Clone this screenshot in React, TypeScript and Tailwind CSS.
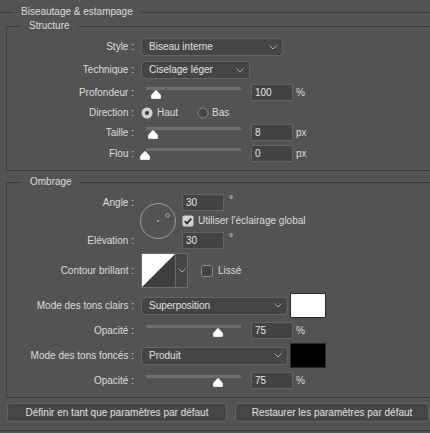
import React from 'react';

/**
 * Layer style panel: bevel & emboss settings (Photoshop, French UI).
 */

function Chevron() {
  return (
    <svg width="8" height="5" viewBox="0 0 8 5" aria-hidden="true">
      <path d="M0.5 0.5 L4 4 L7.5 0.5" fill="none" stroke="#a9a9a9" strokeWidth="1" />
    </svg>
  );
}

function Label({ children }: { children: React.ReactNode }) {
  return <div className="w-[127px] shrink-0 text-right whitespace-nowrap">{children}</div>;
}

function Row({ label, className, children }: { label: string; className: string; children: React.ReactNode }) {
  return (
    <div className={`flex items-center ${className}`}>
      <Label>{label}</Label>
      <div className="ml-[7px] flex items-center">{children}</div>
    </div>
  );
}

function Select({ value, width }: { value: string; width: string }) {
  return (
    <div
      className={`${width} h-[18px] flex items-center justify-between rounded-[3px] border border-[#636363] bg-[#454545] pl-[7px] pr-[5px] text-[#e2e2e2]`}
    >
      <span>{value}</span>
      <Chevron />
    </div>
  );
}

function NumberInput({ value }: { value: string }) {
  return (
    <div className="w-[42px] h-[17px] border border-[#626262] bg-[#434343] pl-[3px] leading-[15px] text-[#e4e4e4]">
      {value}
    </div>
  );
}

function Slider({ pos }: { pos: number }) {
  // pos = thumb centre in px from the start of the track
  return (
    <div className="relative w-[110px] h-[17px] shrink-0">
      <div className="absolute left-[5px] top-[3px] w-[95px] h-[3px] bg-[#6d6d6d]" />
      <svg
        className="absolute top-[5px]"
        style={{ left: 5 + pos - 6 }}
        width="12"
        height="11"
        viewBox="0 0 12 11"
        aria-hidden="true"
      >
        <path
          d="M6 0.8 Q6.6 0.8 7.2 1.5 L10.8 5.6 Q11.3 6.2 11.3 7 L11.3 9 Q11.3 10.3 10 10.3 L2 10.3 Q0.7 10.3 0.7 9 L0.7 7 Q0.7 6.2 1.2 5.6 L4.8 1.5 Q5.4 0.8 6 0.8 Z"
          fill="#ffffff"
          stroke="#2f2f2f"
          strokeWidth="0.6"
        />
      </svg>
    </div>
  );
}

function SliderRow({ label, pos, value, unit, className }: { label: string; pos: number; value: string; unit: string; className: string }) {
  return (
    <Row label={label} className={`h-[17px] ${className}`}>
      <Slider pos={pos} />
      <NumberInput value={value} />
      <span className="ml-[3px]">{unit}</span>
    </Row>
  );
}

function Checkbox({ checked }: { checked: boolean }) {
  return checked ? (
    <svg width="12" height="12" viewBox="0 0 12 12" aria-hidden="true">
      <rect x="0.5" y="0.5" width="11" height="11" rx="2" fill="#d4d4d4" />
      <path d="M2.8 6.2 L5 8.4 L9.3 3.6" fill="none" stroke="#2c2c2c" strokeWidth="1.8" />
    </svg>
  ) : (
    <svg width="12" height="12" viewBox="0 0 12 12" aria-hidden="true">
      <rect x="0.5" y="0.5" width="11" height="11" rx="2" fill="#454545" stroke="#8a8a8a" />
    </svg>
  );
}

function Radio({ checked }: { checked: boolean }) {
  return checked ? (
    <svg width="12" height="12" viewBox="0 0 12 12" aria-hidden="true">
      <circle cx="6" cy="6" r="5.5" fill="#cfcfcf" />
      <circle cx="6" cy="6" r="2" fill="#3a3a3a" />
    </svg>
  ) : (
    <svg width="12" height="12" viewBox="0 0 12 12" aria-hidden="true">
      <circle cx="6" cy="6" r="5" fill="#464646" stroke="#858585" />
    </svg>
  );
}

function Button({ children, width }: { children: React.ReactNode; width: string }) {
  return (
    <button
      className={`${width} h-[19px] shrink-0 rounded-[3px] border border-[#626262] bg-[#464646] text-center leading-[17px] text-[#e0e0e0]`}
    >
      {children}
    </button>
  );
}

export default function App() {
  return (
    <div className="w-[430px] h-[433px] overflow-hidden bg-[#535353] text-[10px] leading-[14px] text-[#dcdcdc] font-['Liberation_Sans',Arial,sans-serif]">
      <fieldset className="mt-[5px] border-y border-[#3d3d3d] pb-[8px]">
        <legend className="ml-[13px] px-[8px]">Biseautage &amp; estampage</legend>

        {/* Structure */}
        <fieldset className="ml-[6px] w-[440px] border border-[#3d3d3d] pt-[5px] pb-[8px]">
          <legend className="ml-[14px] px-[8px]">Structure</legend>

          <Row label="Style :" className="h-[18px]">
            <Select value="Biseau interne" width="w-[142px]" />
          </Row>
          <Row label="Technique :" className="h-[18px] mt-[5px]">
            <Select value="Ciselage léger" width="w-[109px]" />
          </Row>
          <SliderRow label="Profondeur :" pos={9.5} value="100" unit="%" className="mt-[5px]" />
          <Row label="Direction :" className="h-[17px] mt-[3px]">
            <Radio checked />
            <span className="ml-[4px] w-[40px]">Haut</span>
            <Radio checked={false} />
            <span className="ml-[3px]">Bas</span>
          </Row>
          <SliderRow label="Taille :" pos={7} value="8" unit="px" className="mt-[3px]" />
          <SliderRow label="Flou :" pos={-1} value="0" unit="px" className="mt-[4px]" />
        </fieldset>

        {/* Ombrage */}
        <fieldset className="mt-[4px] ml-[6px] w-[440px] border border-[#3d3d3d] pt-[5px] pb-[8px]">
          <legend className="ml-[15px] px-[8px]">Ombrage</legend>

          <div className="flex h-[55px]">
            <div className="flex w-[127px] shrink-0 flex-col justify-between text-right">
              <div className="h-[17px] leading-[17px]">Angle :</div>
              <div className="h-[17px] leading-[17px]">Elévation :</div>
            </div>
            <svg className="ml-[5px] mt-[8px]" width="38" height="38" viewBox="0 0 38 38" aria-hidden="true">
              <circle cx="19" cy="19" r="17.5" fill="none" stroke="#9c9c9c" strokeWidth="1" />
              <circle cx="19" cy="19" r="0.9" fill="#b0b0b0" />
              <circle cx="28.5" cy="13.5" r="1.8" fill="none" stroke="#a8a8a8" strokeWidth="0.9" />
            </svg>
            <div className="ml-[5px] flex flex-col">
              <div className="flex">
                <NumberInput value="30" />
                <span className="ml-[5px] leading-[12px]">°</span>
              </div>
              <div className="mt-[4px] flex h-[12px] items-center">
                <Checkbox checked />
                <span className="ml-[4px]">Utiliser l'éclairage global</span>
              </div>
              <div className="mt-[5px] flex">
                <NumberInput value="30" />
                <span className="ml-[5px] leading-[12px]">°</span>
              </div>
            </div>
          </div>

          <Row label="Contour brillant :" className="h-[35px] mt-[4px]">
            <div className="flex h-[35px] w-[47px] border border-[#6a6a6a] bg-[#454545]">
              <svg width="33" height="33" viewBox="0 0 33 33" aria-hidden="true">
                <rect width="33" height="33" fill="#3f3f3f" />
                <path d="M0 0 H33 L0 33 Z" fill="#ffffff" />
              </svg>
              <div className="flex w-[12px] items-center justify-center border-l border-[#6a6a6a]">
                <Chevron />
              </div>
            </div>
            <div className="ml-[13px] flex items-center">
              <Checkbox checked={false} />
              <span className="ml-[5px]">Lissé</span>
            </div>
          </Row>

          <Row label="Mode des tons clairs :" className="h-[25px] mt-[5px]">
            <Select value="Superposition" width="w-[147px]" />
            <div className="ml-[2px] h-[25px] w-[36px] border border-[#2a2a2a] bg-white" />
          </Row>
          <SliderRow label="Opacité :" pos={71.5} value="75" unit="%" className="mt-[4px]" />
          <Row label="Mode des tons foncés :" className="h-[25px] mt-[4px]">
            <Select value="Produit" width="w-[147px]" />
            <div className="ml-[2px] h-[25px] w-[36px] border border-[#2a2a2a] bg-black" />
          </Row>
          <SliderRow label="Opacité :" pos={71.5} value="75" unit="%" className="mt-[4px]" />
        </fieldset>

        <div className="mt-[5px] flex gap-[8px] pl-[7px]">
          <Button width="w-[220px]">Définir en tant que paramètres par défaut</Button>
          <Button width="w-[194px]">Restaurer les paramètres par défaut</Button>
        </div>
      </fieldset>
    </div>
  );
}
